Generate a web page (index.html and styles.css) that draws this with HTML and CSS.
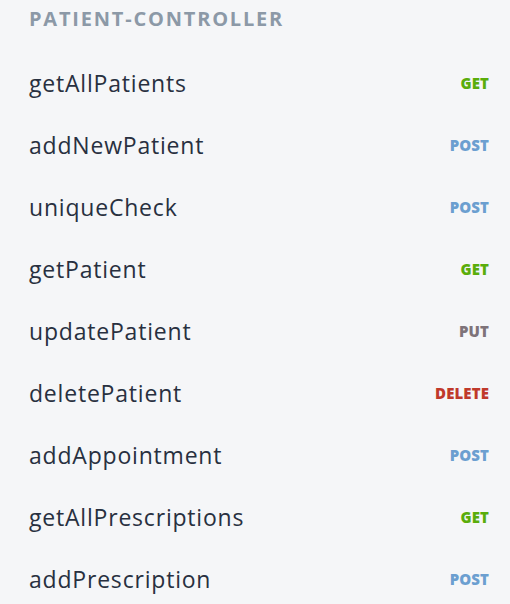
FILE: index.html
```html
<!DOCTYPE html>
<html>
<head>
<meta charset="utf-8">
<link rel="stylesheet" href="styles.css">
</head>
<body>
<div class="panel">
  <div class="title">PATIENT-CONTROLLER</div>
  <ul class="list">
    <li class="item"><span class="name">getAllPatients</span><span class="method get">GET</span></li>
    <li class="item"><span class="name">addNewPatient</span><span class="method post">POST</span></li>
    <li class="item"><span class="name">uniqueCheck</span><span class="method post">POST</span></li>
    <li class="item"><span class="name">getPatient</span><span class="method get">GET</span></li>
    <li class="item"><span class="name">updatePatient</span><span class="method put">PUT</span></li>
    <li class="item"><span class="name">deletePatient</span><span class="method delete">DELETE</span></li>
    <li class="item"><span class="name">addAppointment</span><span class="method post">POST</span></li>
    <li class="item"><span class="name">getAllPrescriptions</span><span class="method get">GET</span></li>
    <li class="item"><span class="name">addPrescription</span><span class="method post">POST</span></li>
  </ul>
</div>
</body>
</html>
```

FILE: styles.css
```css
html, body {
  margin: 0;
  padding: 0;
  background: #f5f6f8;
}
body {
  font-family: "Open Sans", "Noto Sans", sans-serif;
  width: 510px;
  height: 604px;
  overflow: hidden;
}
.panel {
  padding: 5px 21px 0 29px;
}
.title {
  font-size: 20px;
  font-weight: 700;
  color: #8c99a7;
  letter-spacing: 1.8px;
  line-height: 28px;
}
.list {
  list-style: none;
  margin: 0;
  padding: 0;
}
.item {
  display: flex;
  align-items: center;
  justify-content: space-between;
  height: 62px;
}
.item:first-child {
  margin-top: 19px;
}
.name {
  font-size: 23px;
  letter-spacing: 0.8px;
  color: #283040;
}
.method {
  font-size: 15px;
  font-weight: 800;
  letter-spacing: 0.1px;
}
.get { color: #5aad0b; }
.post { color: #6b9fd0; }
.put { color: #7e7379; }
.delete { color: #c0392b; }
```
